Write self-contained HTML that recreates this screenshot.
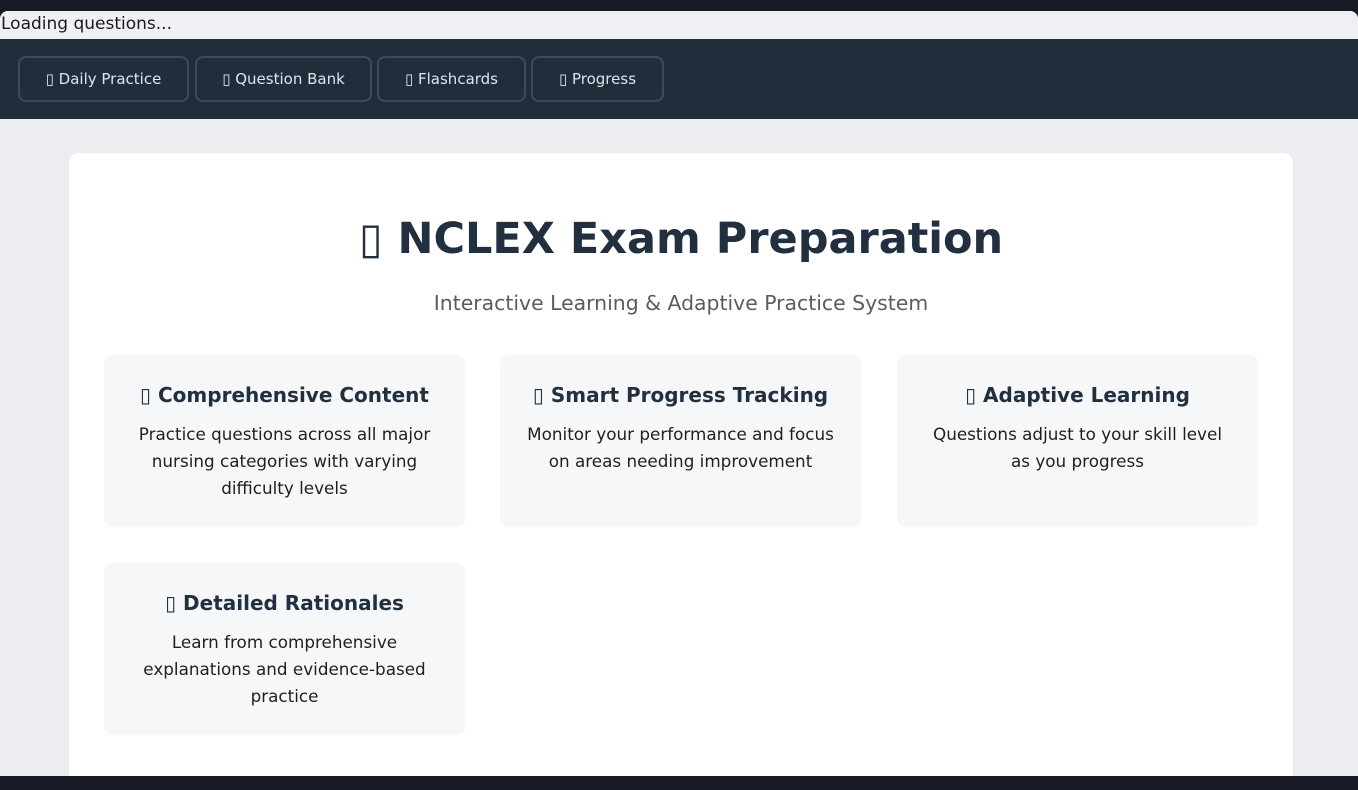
<!DOCTYPE html>
<html><head><meta charset="utf-8"><style>
*{box-sizing:border-box;margin:0;padding:0}
body{width:1358px;height:790px;background:#181b26;font-family:"DejaVu Sans","Liberation Sans",sans-serif;overflow:hidden;position:relative}
.win{position:absolute;left:0;top:11px;width:1358px;height:765px;background:#ecedf1;border-radius:8px 8px 0 0;overflow:hidden}
.load{height:28px;background:#eef0f4;font-size:17px;color:#1a1a1a;line-height:26px;padding-left:1px}
.nav{height:80px;background:#222d3c;position:relative}
.btn{position:absolute;top:17px;height:46px;border:2px solid #3d4a5b;border-radius:8px;color:#dfe4ea;font-size:15px;line-height:42px;text-align:center}
.main{position:absolute;left:69px;top:142px;width:1224px;height:640px;background:#fff;border-radius:10px}
h1{position:absolute;left:0;width:100%;top:61px;text-align:center;font-size:43px;font-weight:bold;color:#212f3e}
.sub{position:absolute;width:100%;top:138px;text-align:center;font-size:20.4px;color:#555d66}
.card{position:absolute;width:361px;height:172px;background:#f5f7f9;border-radius:8px;text-align:center;padding-top:28px}
.card h3{font-size:20px;color:#212f3e;margin-bottom:14px}
.card p{font-size:16.8px;line-height:27px;color:#1f1f1f;padding:0 28px}
</style></head><body>
<div class="win">
<div class="load">Loading questions...</div>
<div class="nav">
<div class="btn" style="left:18px;width:171px">▯ Daily Practice</div>
<div class="btn" style="left:195px;width:177px">▯ Question Bank</div>
<div class="btn" style="left:377px;width:149px">▯ Flashcards</div>
<div class="btn" style="left:531px;width:133px">▯ Progress</div>
</div>
<div class="main">
<h1>▯ NCLEX Exam Preparation</h1>
<div class="sub">Interactive Learning &amp; Adaptive Practice System</div>
<div class="card" style="left:35px;top:202px"><h3>▯ Comprehensive Content</h3><p>Practice questions across all major nursing categories with varying difficulty levels</p></div>
<div class="card" style="left:431px;top:202px"><h3>▯ Smart Progress Tracking</h3><p style="padding:0 20px">Monitor your performance and focus on areas needing improvement</p></div>
<div class="card" style="left:828px;top:202px"><h3>▯ Adaptive Learning</h3><p>Questions adjust to your skill level as you progress</p></div>
<div class="card" style="left:35px;top:410px"><h3>▯ Detailed Rationales</h3><p>Learn from comprehensive explanations and evidence-based practice</p></div>
</div>
</div>
</body></html>
